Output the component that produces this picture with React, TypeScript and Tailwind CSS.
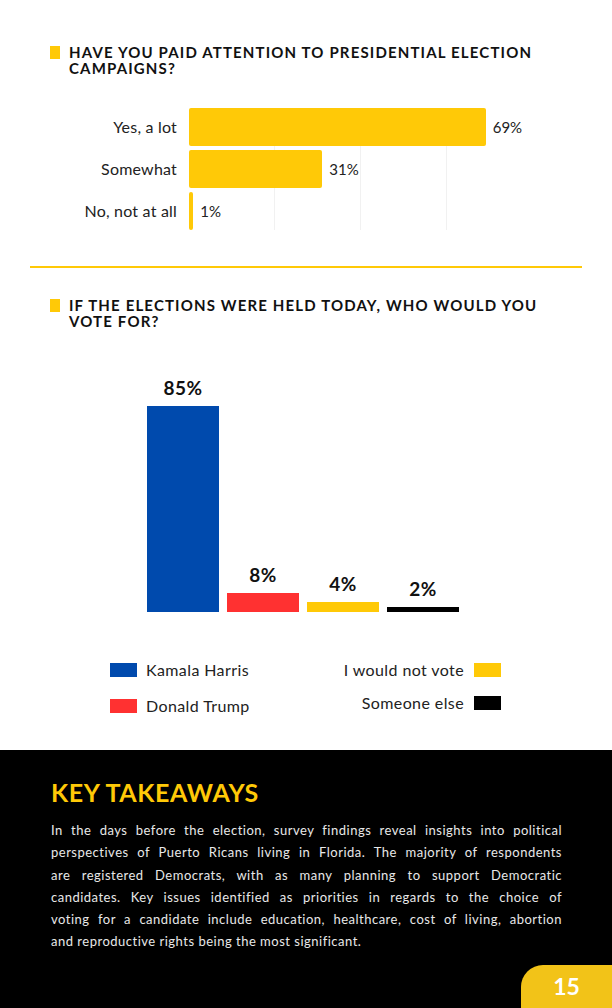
const attention = [
  { label: "Yes, a lot", value: 69 },
  { label: "Somewhat", value: 31 },
  { label: "No, not at all", value: 1 },
];

const vote = [
  { value: 85, color: "bg-[#004aad]" },
  { value: 8, color: "bg-[#ff3131]" },
  { value: 4, color: "bg-[#ffc907]" },
  { value: 2, color: "bg-black" },
];

const paragraph = [
  "In the days before the election, survey findings reveal insights into political",
  "perspectives of Puerto Ricans living in Florida. The majority of respondents",
  "are registered Democrats, with as many planning to support Democratic",
  "candidates. Key issues identified as priorities in regards to the choice of",
  "voting for a candidate include education, healthcare, cost of living, abortion",
  "and reproductive rights being the most significant.",
];

function SectionTitle({ lines }: { lines: string[] }) {
  return (
    <div className="flex items-start pl-[50px]">
      <div className="w-[10px] h-[13px] mt-[1px] shrink-0 bg-[#ffc907]" />
      <h2 className="ml-[9px] -mt-[1px] text-[15px] leading-[16px] font-bold tracking-[1.15px] text-[#111]">
        {lines.map((l) => (
          <div key={l}>{l}</div>
        ))}
      </h2>
    </div>
  );
}

function AttentionChart() {
  const full = 430;
  return (
    <div className="flex mt-[32px]">
      <div className="w-[177px] flex flex-col gap-[4px] text-right text-[16px] tracking-[0.2px] text-[#222]">
        {attention.map((a) => (
          <div key={a.label} className="h-[38px] flex items-center justify-end">
            {a.label}
          </div>
        ))}
      </div>
      <div className="relative ml-[12px] flex flex-col gap-[4px]">
        {/* grid lines */}
        <div className="absolute inset-y-0 left-0 flex">
          {[1, 2, 3].map((g) => (
            <div key={g} className="w-[86px] border-r border-[#f1f1f1]" />
          ))}
        </div>
        {attention.map((a) => (
          <div key={a.label} className="relative h-[38px] flex items-center">
            <div
              className="h-full rounded-[2px] bg-[#ffc907]"
              style={{ width: Math.max(4, (a.value / 100) * full) }}
            />
            <span className="ml-[7px] text-[15px] text-[#222]">{a.value}%</span>
          </div>
        ))}
      </div>
    </div>
  );
}

function VoteChart() {
  const full = 242;
  return (
    <div className="flex items-end gap-[8px] pl-[147px] h-[245px] mt-[38px]">
      {vote.map((v) => (
        <div key={v.value} className="w-[72px] flex flex-col items-center">
          <span className="text-[19px] leading-[19px] font-bold tracking-[0.5px] text-[#111] mb-[9px]">
            {v.value}%
          </span>
          <div className={`w-full ${v.color}`} style={{ height: Math.max(5, (v.value / 100) * full) }} />
        </div>
      ))}
    </div>
  );
}

function Legend() {
  return (
    <div className="flex justify-between pl-[110px] pr-[111px] mt-[50px] text-[16px] tracking-[0.4px] text-[#222]">
      <div className="flex flex-col gap-[20px]">
        <div className="flex items-center gap-[9px] h-[15px]">
          <div className="w-[27px] h-[14px] bg-[#004aad]" />
          <span>Kamala Harris</span>
        </div>
        <div className="flex items-center gap-[9px] h-[15px] mt-[1px]">
          <div className="w-[27px] h-[14px] bg-[#ff3131]" />
          <span>Donald Trump</span>
        </div>
      </div>
      <div className="flex flex-col gap-[18px] items-end">
        <div className="flex items-center gap-[10px] h-[15px]">
          <span>I would not vote</span>
          <div className="w-[27px] h-[14px] bg-[#ffc907]" />
        </div>
        <div className="flex items-center gap-[10px] h-[15px]">
          <span>Someone else</span>
          <div className="w-[27px] h-[14px] bg-black" />
        </div>
      </div>
    </div>
  );
}

export default function App() {
  return (
    <div
      className="w-[612px] h-[1008px] bg-white flex flex-col overflow-hidden"
      style={{ fontFamily: "Lato, 'Noto Sans', sans-serif" }}
    >
      <div className="pt-[45px]">
        <SectionTitle lines={["HAVE YOU PAID ATTENTION TO PRESIDENTIAL ELECTION", "CAMPAIGNS?"]} />
        <AttentionChart />
      </div>

      <div className="mx-[30px] mt-[36px] h-[2px] bg-[#ffc907]" />

      <div className="pt-[30px]">
        <SectionTitle lines={["IF THE ELECTIONS WERE HELD TODAY, WHO WOULD YOU", "VOTE FOR?"]} />
        <VoteChart />
        <Legend />
      </div>

      <div className="mt-auto h-[258px] bg-black flex flex-col">
        <h2 className="pl-[51px] pt-[27px] text-[25px] leading-[30px] font-bold tracking-[0.6px] text-[#ffc907]">
          KEY TAKEAWAYS
        </h2>
        <div className="pl-[51px] pr-[50px] mt-[12px] text-[13px] leading-[22.3px] text-[#e8e8e8] tracking-[0.5px]">
          {paragraph.map((line, i) => (
            <div
              key={i}
              className={i < paragraph.length - 1 ? "text-justify [text-align-last:justify]" : ""}
            >
              {line}
            </div>
          ))}
        </div>
        <div className="mt-auto self-end w-[91px] h-[43px] rounded-tl-[22px] bg-[#f2c318] flex items-center justify-center">
          <span className="text-[23px] font-bold text-white">15</span>
        </div>
      </div>
    </div>
  );
}
